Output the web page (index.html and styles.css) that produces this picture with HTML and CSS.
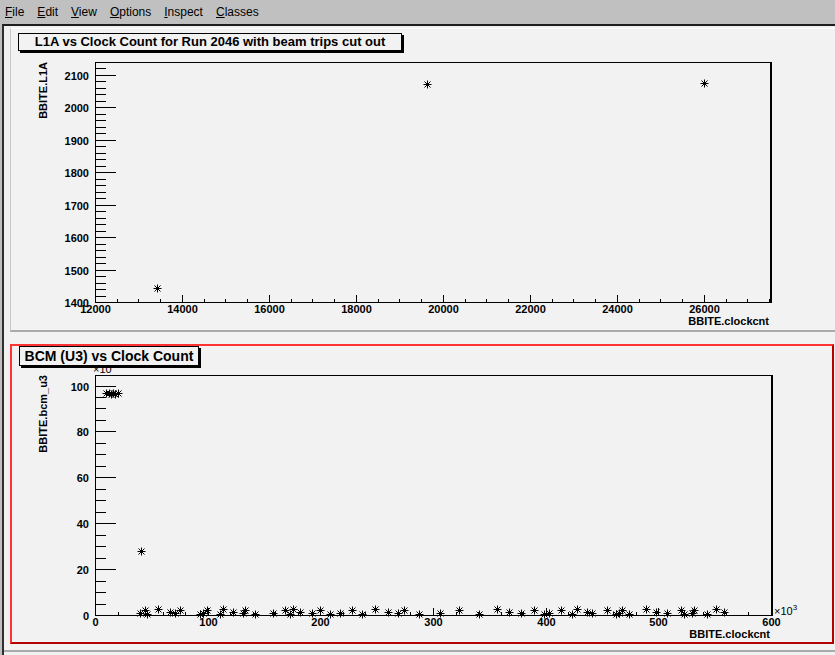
FILE: index.html
```html
<!DOCTYPE html>
<html>

<head>
    <meta charset="utf-8">
    <title>Canvas</title>
    <link rel="stylesheet" href="styles.css">
</head>

<body>
    <div class="menubar">
        <span class="menu"><u>F</u>ile</span>
        <span class="menu"><u>E</u>dit</span>
        <span class="menu"><u>V</u>iew</span>
        <span class="menu"><u>O</u>ptions</span>
        <span class="menu"><u>I</u>nspect</span>
        <span class="menu"><u>C</u>lasses</span>
    </div>

    <div class="canvas">
        <div class="pads">
            <div class="pad pad-top">
                <div class="title title-l1a">L1A vs Clock Count for Run 2046 with beam trips cut out</div>
                <svg id="plot1" class="plot" width="824" height="301" viewBox="11 29 824 301"></svg>
            </div>
            <div class="pad pad-bottom">
                <div class="title title-bcm">BCM (U3) vs Clock Count</div>
                <svg id="plot2" class="plot" width="820" height="296" viewBox="12 346 820 296"></svg>
            </div>
        </div>
    </div>

    <script>
        const NS = "http://www.w3.org/2000/svg";

        function add(parent, tag, attrs, text) {
            const e = document.createElementNS(NS, tag);
            for (const k in attrs) e.setAttribute(k, attrs[k]);
            if (text != undefined) e.textContent = text;
            parent.appendChild(e);
            return e;
        }

        function isMajor(v, step) {
            return Math.abs(v / step - Math.round(v / step)) < 1e-6;
        }

        function drawPlot(svg, p) {
            const sx = v => p.left + (v - p.xmin) * (p.right - p.left) / (p.xmax - p.xmin);
            const sy = v => p.bottom - (v - p.ymin) * (p.bottom - p.top) / (p.ymax - p.ymin);

            // frame box (right side a bit heavier, like root draws it)
            add(svg, "rect", { x: p.left + .5, y: p.top + .5, width: p.right - p.left, height: p.bottom - p.top, class: "frame" });
            add(svg, "line", { x1: p.right + 1.5, y1: p.top, x2: p.right + 1.5, y2: p.bottom + 1, class: "axis" });

            // x axis
            const xlen = (p.bottom - p.top) * 0.03;
            for (let i = 0; ; i++) {
                const v = p.xmin + i * p.xMinor;
                if (v > p.xmax) break;
                const x = Math.round(sx(v)) + .5;
                const major = isMajor(v, p.xMajor);
                add(svg, "line", { x1: x, y1: p.bottom + .5, x2: x, y2: p.bottom + .5 - (major ? xlen : xlen / 2), class: "axis" });
                if (major) add(svg, "text", { x: x, y: p.bottom + 11, class: "lbl", "text-anchor": "middle" }, p.xfmt ? p.xfmt(v) : v);
            }

            // y axis
            const ylen = (p.right - p.left) * 0.03;
            for (let i = 0; ; i++) {
                const v = p.ymin + i * p.yMinor;
                if (v > p.ymax) break;
                const y = Math.round(sy(v)) + .5;
                const major = isMajor(v, p.yMajor);
                add(svg, "line", { x1: p.left + .5, y1: y, x2: p.left + .5 + (major ? ylen : ylen / 2), y2: y, class: "axis" });
                if (major) add(svg, "text", { x: p.left - 6, y: y + 4, class: "lbl", "text-anchor": "end" }, v);
            }

            // titles
            add(svg, "text", { x: p.right - 1, y: p.bottom + 23, class: "lbl", "text-anchor": "end" }, p.xtitle);
            add(svg, "text", { x: 0, y: 0, class: "lbl", "text-anchor": "end", transform: "translate(47," + p.top + ") rotate(-90)" }, p.ytitle);

            // markers
            for (const pt of p.points) {
                const x = Math.round(sx(pt[0])) + .5;
                const y = Math.round(sy(pt[1])) + .5;
                const d = "M" + (x - 4) + " " + y + "H" + (x + 4) +
                    "M" + x + " " + (y - 4) + "V" + (y + 4) +
                    "M" + (x - 3) + " " + (y - 3) + "L" + (x + 3) + " " + (y + 3) +
                    "M" + (x - 3) + " " + (y + 3) + "L" + (x + 3) + " " + (y - 3);
                add(svg, "path", { d: d, class: "marker" });
            }
        }

        function exponent(svg, x, y) {
            const t = add(svg, "text", { x: x, y: y, class: "exp" }, "\u00d710");
            add(t, "tspan", { dy: -5, class: "sup" }, "3");
        }

        // L1A vs clock count
        drawPlot(document.getElementById("plot1"), {
            left: 95, right: 770, top: 62, bottom: 302,
            xmin: 12000, xmax: 27520, xMajor: 2000, xMinor: 500,
            ymin: 1400, ymax: 2140, yMajor: 100, yMinor: 20,
            xtitle: "BBITE.clockcnt", ytitle: "BBITE.L1A",
            points: [[13430, 1444], [19645, 2072], [26003, 2075]]
        });

        // BCM vs clock count
        const bcm = [[10, 96.6], [12, 96.9], [14, 96.4], [16, 96.8], [18, 96.5], [20, 96.7], [41, 28]];
        const xs = [39.9, 44.3, 46.1, 55.8, 66.5, 70.9, 75.3, 93.1, 95.7, 99.3, 110.8, 113.4, 122.3, 131.2,
            132.9, 141.8, 157.7, 168.4, 172.8, 175.5, 181.7, 192.3, 199.4, 208.3, 217.1, 227.8, 236.6, 248.2,
            259.7, 268.5, 274.7, 288.0, 305.8, 323.5, 341.2, 357.2, 367.8, 378.4, 390.0, 398.8, 403.3, 413.9,
            423.6, 428.1, 436.9, 441.4, 454.7, 462.6, 465.3, 468.0, 474.2, 489.3, 498.1, 507.9, 520.3, 523.0,
            530.1, 531.8, 543.3, 551.3, 558.4];
        const ys = [1, 2, 0.5, 2.5, 1.5, 1, 2, 0.3];
        xs.forEach((x, i) => bcm.push([x, ys[i % ys.length]]));

        const plot2 = document.getElementById("plot2");
        drawPlot(plot2, {
            left: 95, right: 771, top: 375, bottom: 615,
            xmin: 0, xmax: 600, xMajor: 100, xMinor: 20,
            ymin: 0, ymax: 104.6, yMajor: 20, yMinor: 5,
            xtitle: "BBITE.clockcnt", ytitle: "BBITE.bcm_u3",
            points: bcm
        });
        exponent(plot2, 774, 615);
        exponent(plot2, 93, 373);
    </script>
</body>

</html>
```

FILE: styles.css
```css
body {
    margin: 0;
    width: 835px;
    height: 655px;
    overflow: hidden;
    background-color: #c0c0c0;
    font-family: "Liberation Sans", Arial, sans-serif;
    color: #000000;
}

.menubar {
    display: flex;
    align-items: center;
    gap: 13px;
    height: 24px;
    padding-left: 5px;
    font-size: 12px;
}

.canvas {
    box-sizing: border-box;
    height: 631px;
    margin-left: 2px;
    padding-top: 2px;
    border-top: 2px solid #1e1e1e;
    border-left: 2px solid #2e2e2e;
    background-color: #f2f2f2;
}

.pads {
    padding: 0 0 6px 6px;
    border-bottom: 2px solid #aaaaaa;
}

.pad {
    position: relative;
    overflow: hidden;
    background-color: #f2f2f2;
}

.pad svg {
    display: block;
    shape-rendering: crispEdges;
}

.pad-top {
    height: 301px;
    border-top: 1px solid #ffffff;
    border-left: 1px solid #c8c8c8;
    border-bottom: 2px solid #aaaaaa;
}

.pad-bottom {
    height: 296px;
    margin-top: 12px;
    margin-right: 1px;
    border: 2px solid #ff3333;
    border-right-color: #b40000;
    border-bottom-color: #b40000;
}

.title {
    position: absolute;
    z-index: 1;
    box-sizing: border-box;
    border: 1px solid #000000;
    box-shadow: 2px 2px 0 #000000;
    background-color: #f2f2f2;
    font-weight: bold;
    text-align: center;
    white-space: nowrap;
}

.title-l1a {
    left: 7px;
    top: 4px;
    width: 384px;
    height: 18px;
    line-height: 16px;
    font-size: 13px;
}

.title-bcm {
    left: 7px;
    top: 0;
    width: 180px;
    height: 20px;
    line-height: 18px;
    font-size: 14px;
}

.plot .frame {
    fill: none;
    stroke: #000000;
    stroke-width: 1;
}

.plot .axis {
    stroke: #000000;
    stroke-width: 1;
}

.plot .marker {
    fill: none;
    stroke: #000000;
    stroke-width: 1;
    shape-rendering: auto;
}

.plot .lbl {
    font: bold 11px "Liberation Sans", Arial, sans-serif;
    fill: #000000;
}

.plot .exp {
    font: 11px "Liberation Sans", Arial, sans-serif;
    fill: #000000;
}

.plot .sup {
    font-size: 8px;
}
```
